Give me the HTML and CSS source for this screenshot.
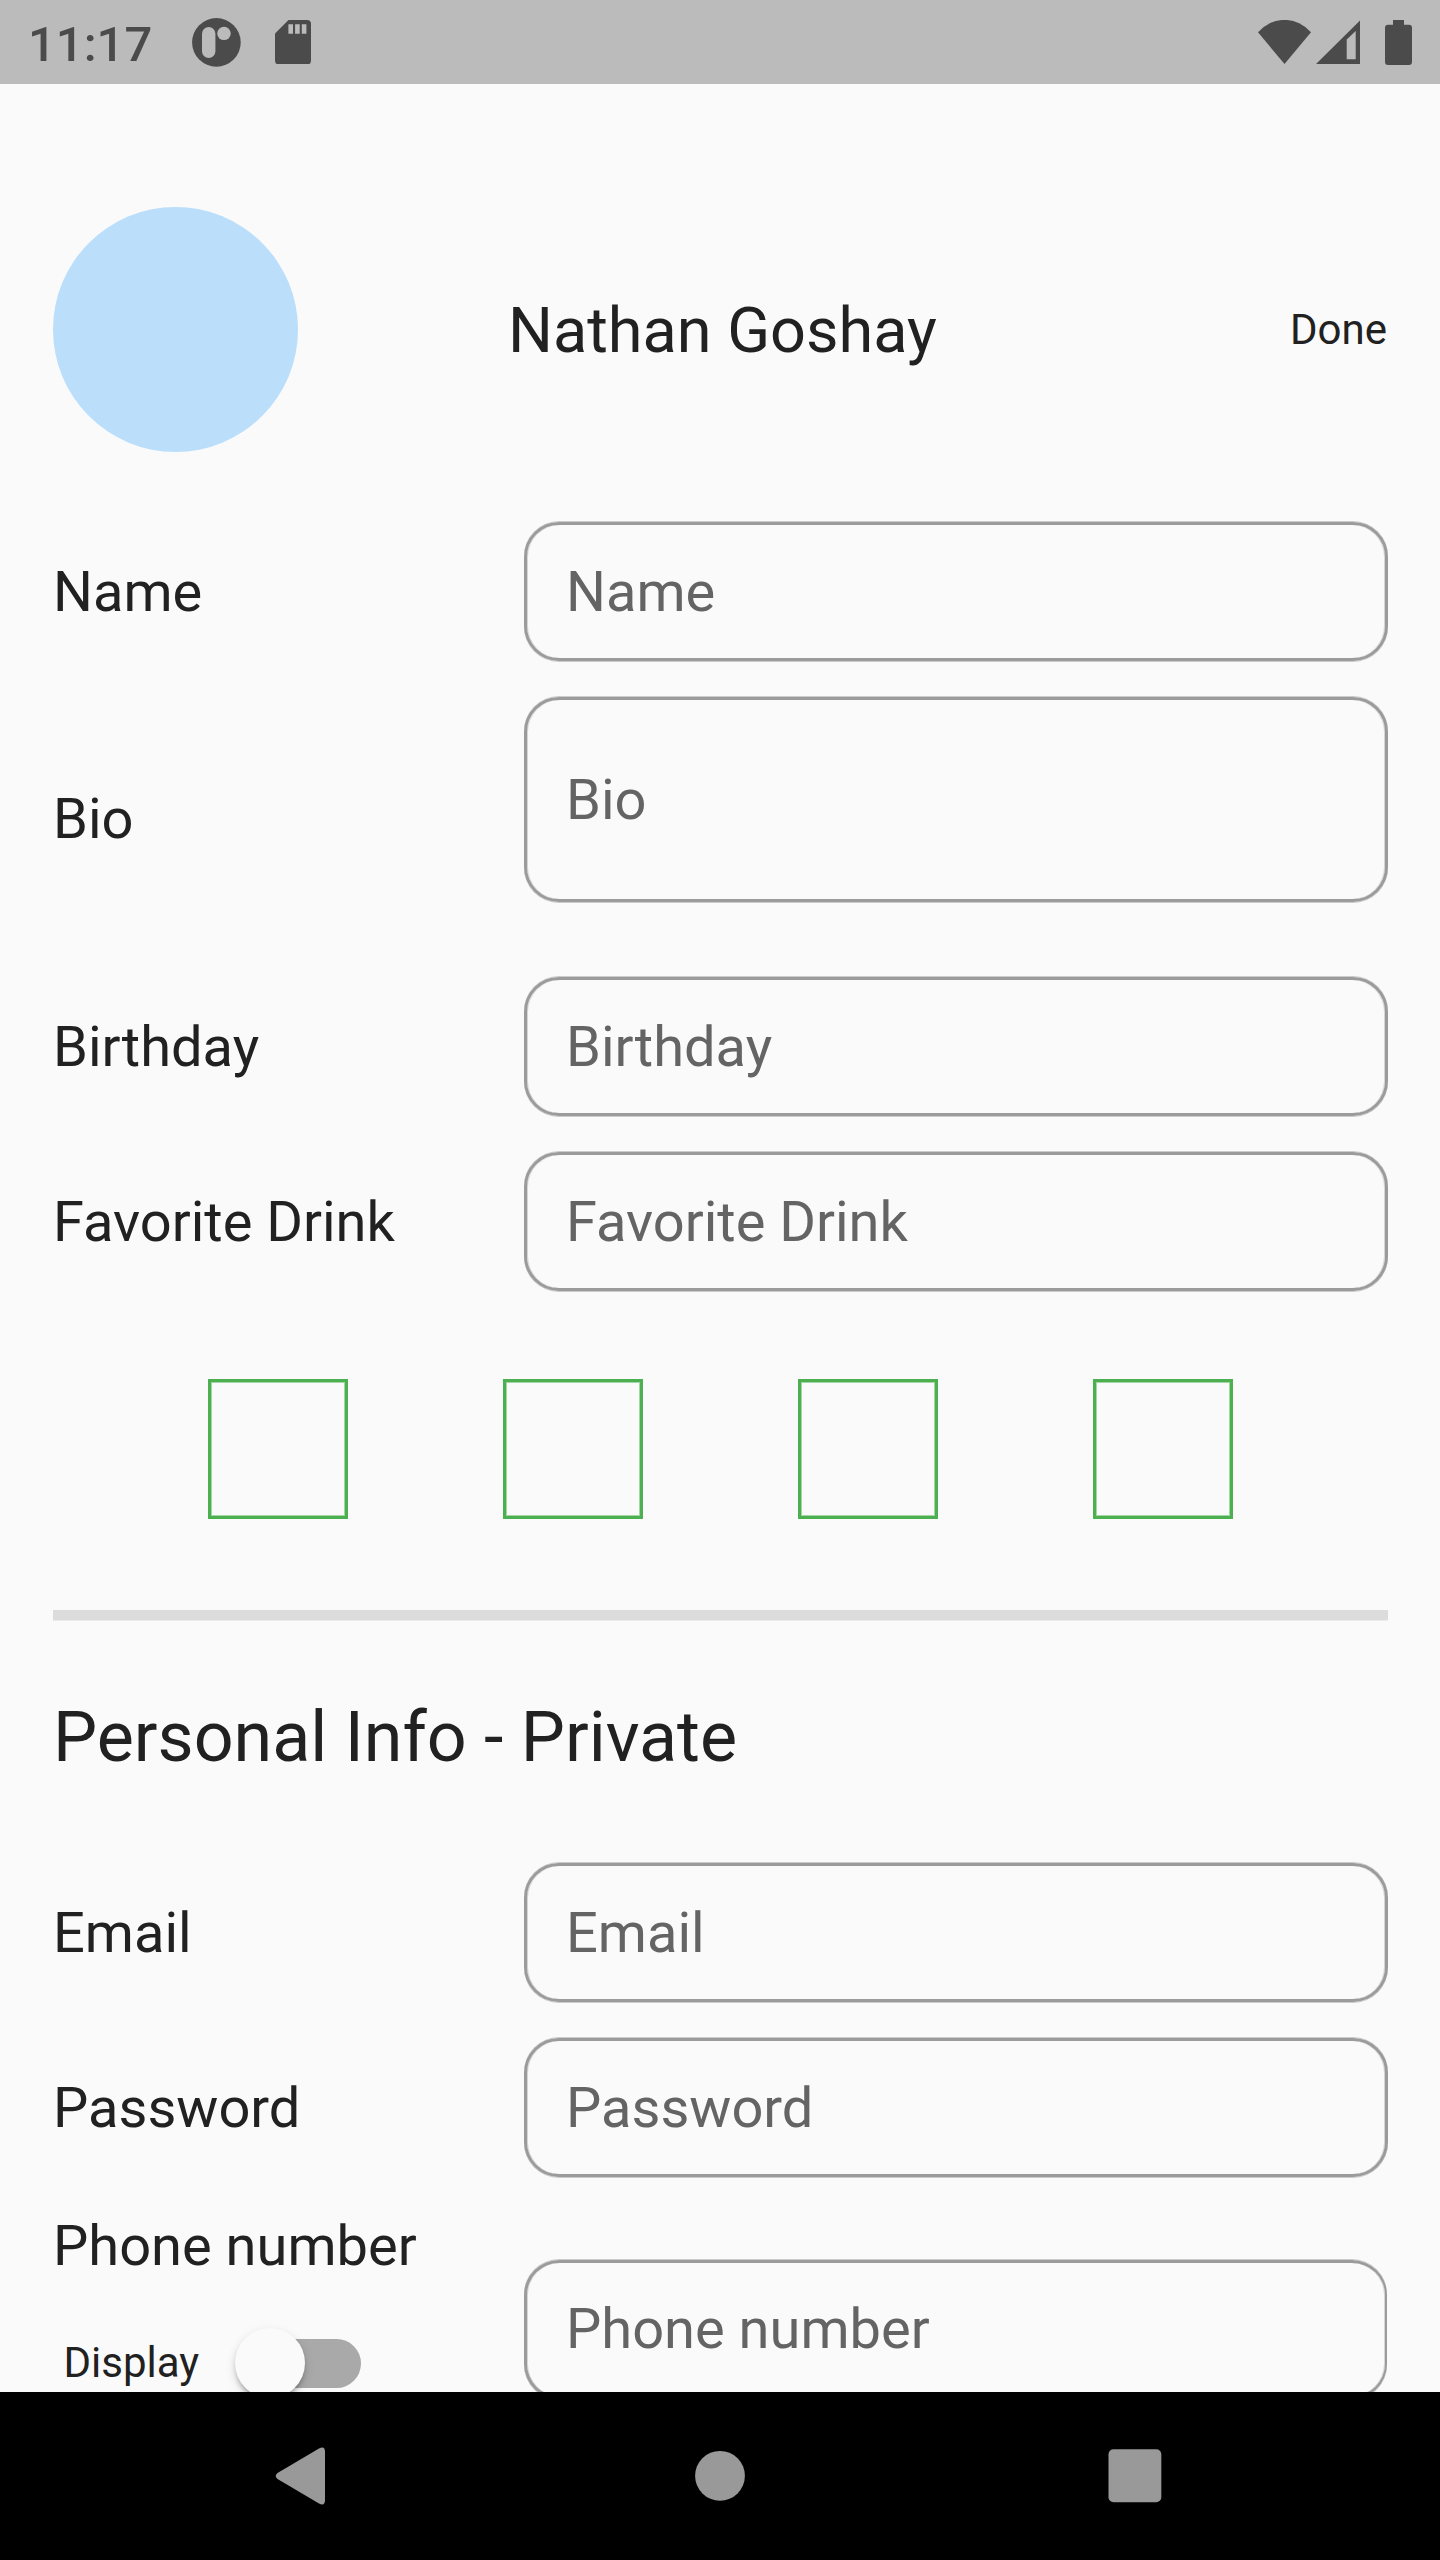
FILE: index.html
```html
<!DOCTYPE html>
<html lang="en">
<head>
<meta charset="utf-8">
<title>Profile</title>
<link rel="stylesheet" href="styles.css">
</head>
<body>
<div class="status">
  <span class="clock">11:17</span>
  <svg class="app-icon" viewBox="0 0 49 49"><circle cx="24.400" cy="24.400" r="24.300" fill="#4b4b4b"/><rect x="10" y="9" width="13.400" height="31" rx="6.700" fill="#bbb"/><circle cx="32" cy="15.400" r="6.700" fill="#bbb"/></svg>
  <svg class="sd-icon" viewBox="0 0 36 44.500"><path d="M13.500 0H32a4 4 0 0 1 4 4v36.500a4 4 0 0 1-4 4H4a4 4 0 0 1-4-4V13.500z" fill="#4b4b4b"/><path d="M13.400 4.300h4.600v9.400h-4.600zM20.100 4.300h4.600v9.400h-4.600zM26.800 4.300h4.600v9.400h-4.600z" fill="#bbb"/></svg>
  <div class="indicators">
    <svg class="wifi" viewBox="0 0 53 44"><path d="M0 12.300A34.500 34.500 0 0 1 53 12.300L26.500 44z" fill="#4b4b4b"/></svg>
    <svg class="signal" viewBox="0 0 44.500 44"><path fill-rule="evenodd" d="M44.500 0V44H0zM39.700 11L30.700 19.500V39.300H39.700z" fill="#4b4b4b"/></svg>
    <svg class="battery" viewBox="0 0 27 45"><path d="M8 0h11v4.700h5q3 0 3 3V42q0 3-3 3H3q-3 0-3-3V7.700q0-3 3-3h5z" fill="#4b4b4b"/></svg>
  </div>
</div>
<main class="page">
  <header class="profile"><div class="avatar"></div><h1 class="title">Nathan Goshay</h1><span class="done">Done</span></header>
  <div class="row"><span class="label">Name</span><div class="field">Name</div></div>
  <div class="row bio"><span class="label">Bio</span><div class="field">Bio</div></div>
  <div class="row"><span class="label">Birthday</span><div class="field">Birthday</div></div>
  <div class="row"><span class="label">Favorite Drink</span><div class="field">Favorite Drink</div></div>
  <div class="boxes"><i class="box"></i><i class="box"></i><i class="box"></i><i class="box"></i></div>
  <hr class="divider">
  <h2 class="section">Personal Info - Private</h2>
  <div class="row"><span class="label">Email</span><div class="field">Email</div></div>
  <div class="row"><span class="label">Password</span><div class="field">Password</div></div>
  <div class="row phone">
    <div class="phone-side"><span class="label">Phone number</span><div class="display"><span class="display-text">Display</span><div class="switch"><div class="knob"></div></div></div></div>
    <div class="field">Phone number</div>
  </div>
</main>
<nav class="nav">
  <svg class="nav-icons" viewBox="0 0 1440 168" fill="#999"><path d="M277.500 81L319 56.500Q325 53.500 325 60V108Q325 114.500 319 111.500L277.500 87Q274 84 277.500 81z"/><circle cx="720" cy="83.800" r="24.900"/><rect x="1108.500" y="57.300" width="52.800" height="53" rx="5"/></svg>
</nav>
</body>
</html>
```
FILE: styles.css
```css
* { box-sizing: border-box; }
body { margin: 0; width: 1440px; height: 2560px; display: flex; flex-direction: column; overflow: hidden; background: #fafafa; color: #212121; font-family: Roboto, sans-serif; }
.status { height: 84px; flex: none; display: flex; align-items: center; padding: 0 28px; background: #bbb; color: #4b4b4b; }
.clock { width: 164px; align-self: flex-start; margin-top: 16px; font-size: 49px; font-weight: 500; line-height: 57px; }
.app-icon { width: 49px; height: 49px; margin-top: 1px; }
.sd-icon { width: 36px; height: 44.5px; margin-left: 34.3px; }
.indicators { margin-left: auto; display: flex; align-items: center; }
.wifi { width: 53px; height: 44px; margin-top: -1px; }
.signal { width: 44.5px; height: 44px; margin-left: 4.5px; }
.battery { width: 27px; height: 45px; margin-left: 25px; }
.page { height: 2308px; flex: none; overflow: hidden; padding: 123px 52px 0 53px; }
.profile { height: 245px; display: flex; align-items: center; margin-bottom: 70px; }
.avatar { width: 245px; height: 245px; border-radius: 50%; background: #bbdefb; }
.title { margin: 2px 0 0 210px; font-size: 63px; font-weight: 400; white-space: nowrap; }
.done { margin: 0 1px 0 auto; font-size: 42px; }
.row { height: 139px; margin-bottom: 36px; display: flex; align-items: center; }
.label { width: 471px; flex: none; padding-top: 1px; font-size: 56px; line-height: 66px; }
.field { width: 864px; height: 139px; flex: none; display: flex; align-items: center; border: 3px solid #9b9b9b; border-radius: 35px; box-shadow: 0 1px #9b9b9b80, 0 -1px #9b9b9b80, inset 1px 0 #9b9b9b60, inset -1px 0 #9b9b9b60; padding: 1px 0 0 39px; font-size: 56px; line-height: 66px; color: #646464; }
.bio { height: 243px; margin-bottom: 37px; }
.bio .field { height: 205px; align-self: flex-start; }
.boxes { height: 140px; margin-top: 88px; display: flex; justify-content: space-evenly; }
.box { width: 140px; height: 140px; border: 3px solid #4caf50; box-shadow: inset 0 0 0 1px #4caf5080; }
.divider { margin: 91px 0 0; border: 0; border-bottom: 1px solid #ebebeb; height: 11px; background: #dcdcdc; }
.section { margin: 75px 0 85px; font-size: 70px; line-height: 82px; font-weight: 400; }
.phone { height: 210px; align-items: flex-start; }
.phone-side { width: 471px; }
.phone .label { display: block; padding-top: 0; }
.phone .field { width: 863px; margin-top: 47px; padding: 0 0 1px 39px; border-right-width: 2px; }
.display { display: flex; align-items: center; padding-left: 10.5px; margin-top: 35px; height: 98px; }
.display-text { width: 182px; font-size: 42px; line-height: 49px; padding-bottom: 1px; }
.switch { width: 115.5px; height: 49px; border-radius: 25px; background: #a9a9a9; }
.knob { width: 70px; height: 70px; margin: -10.5px 0 0 -10.5px; border-radius: 50%; background: #fafafa; box-shadow: 0 7px 4px -4px #0003, 0 4px 4px #0002, 0 4px 11px #0002; }
.nav { height: 168px; flex: none; background: #000; }
.nav-icons { display: block; width: 1440px; height: 168px; }
```
